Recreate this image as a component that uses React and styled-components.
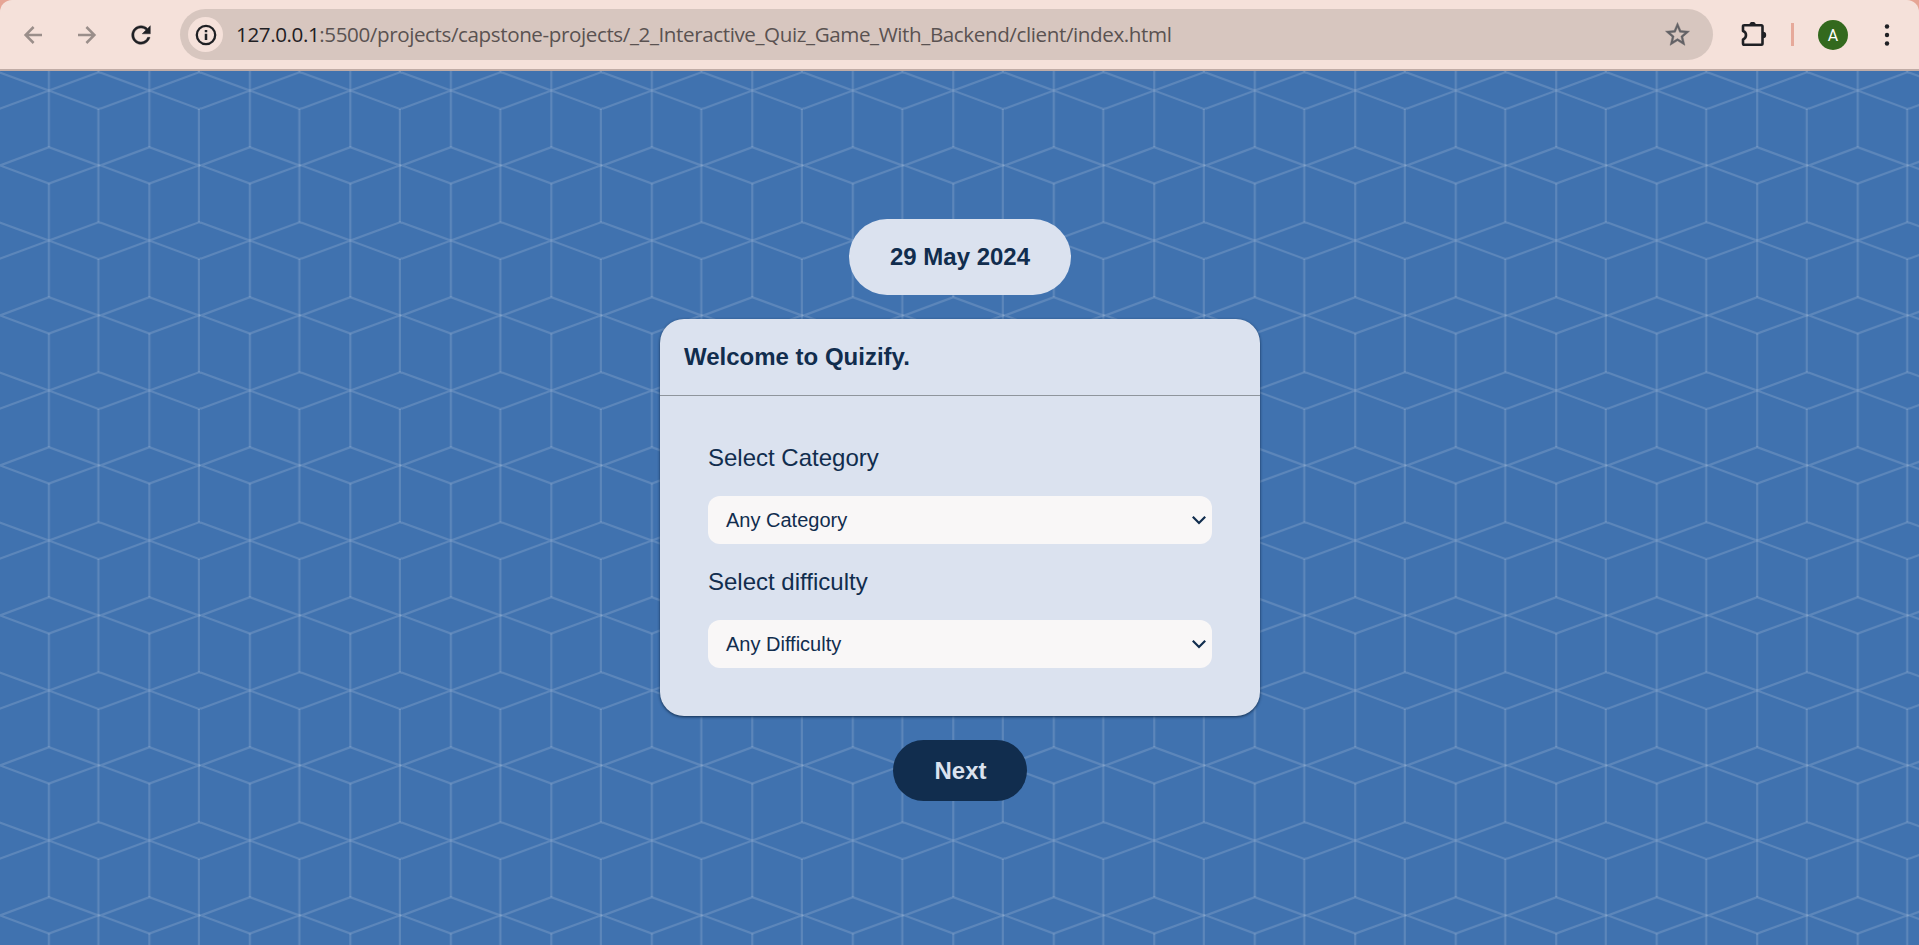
import React from "react";
import styled, { createGlobalStyle } from "styled-components";

const GlobalStyle = createGlobalStyle`
  *, *::before, *::after { box-sizing: border-box; }
  body { margin: 0; background: #e6a595; overflow: hidden; font-family: "Liberation Sans", Arial, sans-serif; }
  h1, p { margin: 0; }
`;

const Window = styled.div`
  display: flex;
  flex-direction: column;
  height: 100vh;
`;

const Toolbar = styled.header`
  display: flex;
  align-items: center;
  flex: none;
  height: 71px;
  padding: 0 11px 0 12px;
  background: #f5e1da;
  border-bottom: 2px solid #c0aca6;
  border-radius: 12px 12px 0 0;
`;

const ToolButton = styled.button`
  display: flex;
  align-items: center;
  justify-content: center;
  flex: none;
  width: 42px;
  height: 42px;
  margin-left: ${(p) => p.$gap || 0}px;
  padding: 0;
  border: 0;
  background: none;
  color: ${(p) => (p.$muted ? "#9a8e8a" : "#1f2024")};
`;

const AddressBar = styled.div`
  display: flex;
  align-items: center;
  flex: none;
  width: 1533px;
  height: 51px;
  margin-left: 18px;
  padding: 0 21px 0 8px;
  border-radius: 26px;
  background: #d7c6bf;
`;

const SiteInfo = styled.span`
  display: flex;
  align-items: center;
  justify-content: center;
  width: 35px;
  height: 35px;
  margin-right: 13px;
  border-radius: 50%;
  background: #f5e1da;
  color: #1f2024;
`;

const Url = styled.span`
  flex: 1;
  padding-bottom: 2px;
  color: #5a5251;
  font: 20.6px/30px "Open Sans", "Noto Sans", sans-serif;
  letter-spacing: -0.4px;
  white-space: nowrap;
`;

const Host = styled.span`
  color: #1f2024;
`;

const Divider = styled.span`
  flex: none;
  width: 3px;
  height: 23px;
  margin-left: 16px;
  background: #e6a99a;
`;

const Avatar = styled.span`
  flex: none;
  width: 30px;
  height: 30px;
  margin-left: 24px;
  border-radius: 50%;
  background: #33691e;
  color: #fff;
  font: 16px/31px Roboto, sans-serif;
  text-align: center;
`;

const Page = styled.main`
  position: relative;
  display: flex;
  flex-direction: column;
  align-items: center;
  flex: 1;
  gap: 24px;
  padding-top: 148px;
  background: #4072af;
  color: #112d4e;
  overflow: hidden;
`;

const Wallpaper = styled.svg`
  position: absolute;
  inset: 0;
  width: 100%;
  height: 100%;
`;

const DatePill = styled.p`
  position: relative;
  width: 222px;
  padding: 24px 0 24px 1px;
  border-radius: 38px;
  background: #dbe2ef;
  font-size: 24px;
  font-weight: 700;
  line-height: 28px;
  text-align: center;
`;

const Card = styled.section`
  position: relative;
  width: 600px;
  border-radius: 24px;
  background: #dbe2ef;
  box-shadow: 0 1px 3px #112d4e;
`;

const CardHeader = styled.h1`
  height: 77px;
  padding: 24px 24px 24px 24.5px;
  border-bottom: 1px solid #8f959c;
  font-size: 24px;
  font-weight: 700;
  line-height: 28px;
`;

const Form = styled.div`
  display: flex;
  flex-direction: column;
  gap: 24px;
  padding: 48px;
`;

const Label = styled.label`
  padding-left: 0.5px;
  font-size: 24px;
  line-height: 28px;
`;

const SelectBox = styled.div`
  display: flex;
  align-items: center;
  justify-content: space-between;
  height: 48px;
  padding: 0 5px 0 18.5px;
  border-radius: 12px;
  background: #f9f7f7;
  font-size: 20px;
`;

const NextButton = styled.button`
  position: relative;
  width: 134px;
  height: 61px;
  padding: 0 0 0 2px;
  border: 0;
  border-radius: 31px;
  background: #112d4e;
  color: #dbe2ef;
  font: 700 24px/28px "Liberation Sans", Arial, sans-serif;
`;

const ArrowIcon = ({ flip }) => (
  <svg width="20" height="20" viewBox="0 0 20 20" fill="none" stroke="currentColor" strokeWidth="2.5">
    <path d={flip ? "M1 10H17.5M9.4 2L17.4 10L9.4 18" : "M19 10H2.5M10.6 2L2.6 10L10.6 18"} />
  </svg>
);

const ReloadIcon = () => (
  <svg width="28" height="28" viewBox="0 0 24 24" fill="currentColor" stroke="currentColor" strokeWidth="0.35">
    <path d="M17.65 6.35C16.2 4.9 14.21 4 12 4c-4.42 0-7.99 3.58-7.99 8s3.57 8 7.99 8c3.73 0 6.84-2.55 7.73-6h-2.08c-.82 2.33-3.04 4-5.65 4-3.31 0-6-2.69-6-6s2.69-6 6-6c1.66 0 3.14.69 4.22 1.78L13 11h7V4l-2.35 2.35z" />
  </svg>
);

const InfoIcon = () => (
  <svg width="22" height="22" viewBox="0 0 22 22" fill="none" stroke="currentColor" strokeWidth="2.3">
    <circle cx="11" cy="11" r="9.2" />
    <path d="M11 9.8V16M11 6V8.2" strokeWidth="2.5" />
  </svg>
);

const StarIcon = () => (
  <svg width="29" height="29" viewBox="0 0 24 24" fill="#636266" stroke="#636266" strokeWidth="0.3">
    <path d="M22 9.24l-7.19-.62L12 2 9.19 8.63 2 9.24l5.46 4.73L5.82 21 12 17.27 18.18 21l-1.63-7.03L22 9.24zM12 15.4l-3.76 2.27 1-4.28-3.32-2.88 4.38-.38L12 6.1l1.71 4.04 4.38.38-3.32 2.88 1 4.28L12 15.4z" />
  </svg>
);

const PuzzleIcon = () => (
  <svg width="26" height="26" viewBox="0 0 26 26">
    <path d="M2 4.4Q2 3.2 3.2 3.2H20.3Q21.5 3.2 21.5 4.4V21.6Q21.5 22.8 20.3 22.8H3.2Q2 22.8 2 21.6V17.4Q5 16.4 5 13.1Q5 9.9 2 8.9Z" fill="none" stroke="currentColor" strokeWidth="2.6" strokeLinejoin="round" />
    <path d="M8.4 3A3.2 3.2 0 0 1 14.8 3ZM22 9.8A3.2 3.2 0 0 1 22 16.2Z" fill="currentColor" />
  </svg>
);

const MenuIcon = () => (
  <svg width="6" height="24" viewBox="0 0 6 24" fill="currentColor">
    <circle cx="3" cy="3.5" r="2.2" />
    <circle cx="3" cy="12" r="2.2" />
    <circle cx="3" cy="20.5" r="2.2" />
  </svg>
);

const Chevron = () => (
  <svg width="16" height="10" viewBox="0 0 16 10" fill="none" stroke="#112d4e" strokeWidth="2.2">
    <path d="M1.8 1.8L8 8L14.2 1.8" />
  </svg>
);

const CubePattern = () => (
  <Wallpaper aria-hidden="true">
    <defs>
      <pattern id="cubes" width="100.49" height="150" patternUnits="userSpaceOnUse">
        <g fill="none" stroke="rgba(219, 226, 239, 0.18)" strokeWidth="2.1">
          <path d="M0 94.4L48.9 76.2L98.4 94.4L48.9 112.6Z" />
          <path d="M98.4 94.4H100.49" />
          <path d="M-1 1.3L48.9 19.6L98.4 1.3L102 2.4M-1 37.9L48.9 19.6L98.4 37.9L102 36.8" />
          <path d="M48.9 0V76.2M48.9 112.6V150M98.4 37.9V150M98.4 0V1.3" />
        </g>
      </pattern>
    </defs>
    <rect width="100%" height="100%" fill="url(#cubes)" />
  </Wallpaper>
);

export default function App() {
  return (
    <Window>
      <GlobalStyle />
      <Toolbar>
        <ToolButton $muted><ArrowIcon /></ToolButton>
        <ToolButton $muted $gap={12}><ArrowIcon flip /></ToolButton>
        <ToolButton $gap={12}><ReloadIcon /></ToolButton>
        <AddressBar>
          <SiteInfo><InfoIcon /></SiteInfo>
          <Url>
            <Host>127.0.0.1</Host>:5500/projects/capstone-projects/_2_Interactive_Quiz_Game_With_Backend/client/index.html
          </Url>
          <StarIcon />
        </AddressBar>
        <ToolButton $gap={20}><PuzzleIcon /></ToolButton>
        <Divider />
        <Avatar>A</Avatar>
        <ToolButton $gap={18}><MenuIcon /></ToolButton>
      </Toolbar>
      <Page>
        <CubePattern />
        <DatePill>29 May 2024</DatePill>
        <Card>
          <CardHeader>Welcome to Quizify.</CardHeader>
          <Form>
            <Label>Select Category</Label>
            <SelectBox>Any Category<Chevron /></SelectBox>
            <Label>Select difficulty</Label>
            <SelectBox>Any Difficulty<Chevron /></SelectBox>
          </Form>
        </Card>
        <NextButton>Next</NextButton>
      </Page>
    </Window>
  );
}
